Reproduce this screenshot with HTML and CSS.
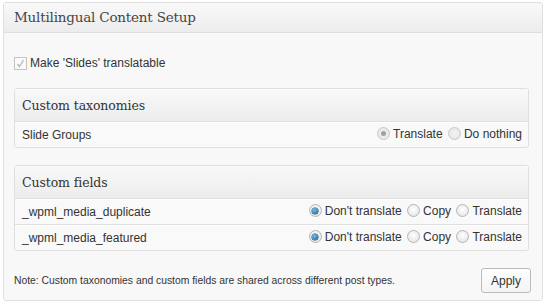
FILE: index.html
```html
<!DOCTYPE html>
<html>
<head>
<meta charset="utf-8">
<link rel="stylesheet" href="styles.css">
</head>
<body>
<div class="postbox">
  <h3 class="hndle">Multilingual Content Setup</h3>
  <div class="inside">
    <label class="make"><span class="cb"><svg width="9" height="9" viewBox="0 0 9 9"><path d="M1.5 5 L3.5 7.5 L7.5 1" fill="none" stroke="#b8b8b8" stroke-width="1.3"/></svg></span>Make 'Slides' translatable</label>

    <table class="widefat">
      <thead><tr><th colspan="2">Custom taxonomies</th></tr></thead>
      <tbody>
        <tr>
          <td>Slide Groups</td>
          <td class="opts">
            <label><span class="radio dis on"></span>Translate</label>
            <label><span class="radio dis"></span>Do nothing</label>
          </td>
        </tr>
      </tbody>
    </table>

    <table class="widefat">
      <thead><tr><th colspan="2">Custom fields</th></tr></thead>
      <tbody>
        <tr>
          <td>_wpml_media_duplicate</td>
          <td class="opts">
            <label><span class="radio sel"></span>Don't translate</label>
            <label><span class="radio"></span>Copy</label>
            <label><span class="radio"></span>Translate</label>
          </td>
        </tr>
        <tr>
          <td>_wpml_media_featured</td>
          <td class="opts">
            <label><span class="radio sel"></span>Don't translate</label>
            <label><span class="radio"></span>Copy</label>
            <label><span class="radio"></span>Translate</label>
          </td>
        </tr>
      </tbody>
    </table>

    <div class="foot">
      <span class="note">Note: Custom taxonomies and custom fields are shared across different post types.</span>
      <button class="button">Apply</button>
    </div>
  </div>
</div>
</body>
</html>
```

FILE: styles.css
```css
html, body {
  margin: 0;
  padding: 0;
  background: #fff;
}
body {
  padding: 2px 0 0 3px;
  font-family: "Liberation Sans", Arial, sans-serif;
  color: #333;
}
.postbox {
  border: 1px solid #dfdfdf;
  border-radius: 3px;
  background: #f5f5f5;
  box-sizing: border-box;
  width: 540px;
  height: 299px;
  overflow: hidden;
}
.hndle {
  margin: 0;
  height: 30px;
  box-sizing: border-box;
  padding: 6px 0 0 10px;
  font-family: "DejaVu Serif", Georgia, serif;
  font-weight: normal;
  font-size: 13.5px;
  color: #464646;
  background: linear-gradient(to bottom, #f9f9f9, #ececec);
  border-bottom: 1px solid #dfdfdf;
  letter-spacing: -0.2px;
}
.inside {
  padding: 0 12px 0 10px;
  background: #f8f8f8;
  height: 268px;
}
.make {
  display: flex;
  align-items: center;
  height: 18px;
  padding-top: 21px;
  font-size: 12px;
  color: #333;
}
.cb {
  width: 11px;
  height: 11px;
  border: 1px solid #c4c4c4;
  background: #fafafa;
  margin-right: 3px;
  display: flex;
  align-items: center;
  justify-content: center;
}
.widefat {
  width: 515px;
  border-collapse: separate;
  border-spacing: 0;
  border: 1px solid #dfdfdf;
  border-radius: 3px;
  background: #f9f9f9;
  margin-top: 16px;
  font-size: 12px;
}
.widefat + .widefat { margin-top: 17px; }
.widefat th {
  text-align: left;
  font-family: "DejaVu Serif", Georgia, serif;
  font-weight: normal;
  font-size: 12.5px;
  color: #333;
  height: 33px;
  padding: 0 0 0 7px;
  background: linear-gradient(to bottom, #f9f9f9, #ececec);
  border-bottom: 1px solid #dfdfdf;
  box-sizing: border-box;
  letter-spacing: -0.1px;
}
.widefat td {
  height: 24px;
  padding: 0 0 0 7px;
  color: #333;
  border-top: 1px solid #fff;
  border-bottom: 1px solid #dfdfdf;
}
.widefat tr:last-child td { border-bottom: 0; }
.widefat td.opts {
  text-align: right;
  padding: 0 6px 0 0;
  white-space: nowrap;
}
.opts label {
  display: inline-flex;
  align-items: center;
  margin-left: 2px;
}
.radio {
  display: inline-block;
  width: 11px;
  height: 11px;
  border-radius: 50%;
  border: 1px solid #b5b5b5;
  background: radial-gradient(circle at 50% 40%, #fff, #e0e0e0);
  margin-right: 3px;
  position: relative;
  box-sizing: content-box;
}
.radio.dis { border-color: #c8c8c8; background: radial-gradient(circle, #f4f4f4, #e2e2e2); }
.radio.on::after, .radio.sel::after {
  content: "";
  position: absolute;
  left: 3px;
  top: 3px;
  width: 5px;
  height: 5px;
  border-radius: 50%;
  background: #a0a0a0;
}
.radio.sel::after {
  background: radial-gradient(circle at 40% 35%, #6ec2f0, #0a5a94);
  left: 2.5px; top: 2.5px; width: 6px; height: 6px;
  box-shadow: 0 0 0 0.5px #1c3d58;
}
.foot {
  display: flex;
  justify-content: space-between;
  align-items: center;
  margin-top: 17px;
  width: 517px;
}
.note {
  font-size: 10.35px;
  color: #333;
}
.button {
  width: 50px;
  height: 25px;
  border: 1px solid #bbb;
  border-radius: 3px;
  background: linear-gradient(to bottom, #fefefe, #f4f4f4);
  font-family: "Liberation Sans", Arial, sans-serif;
  font-size: 12px;
  color: #333;
  padding: 0;
}
```
